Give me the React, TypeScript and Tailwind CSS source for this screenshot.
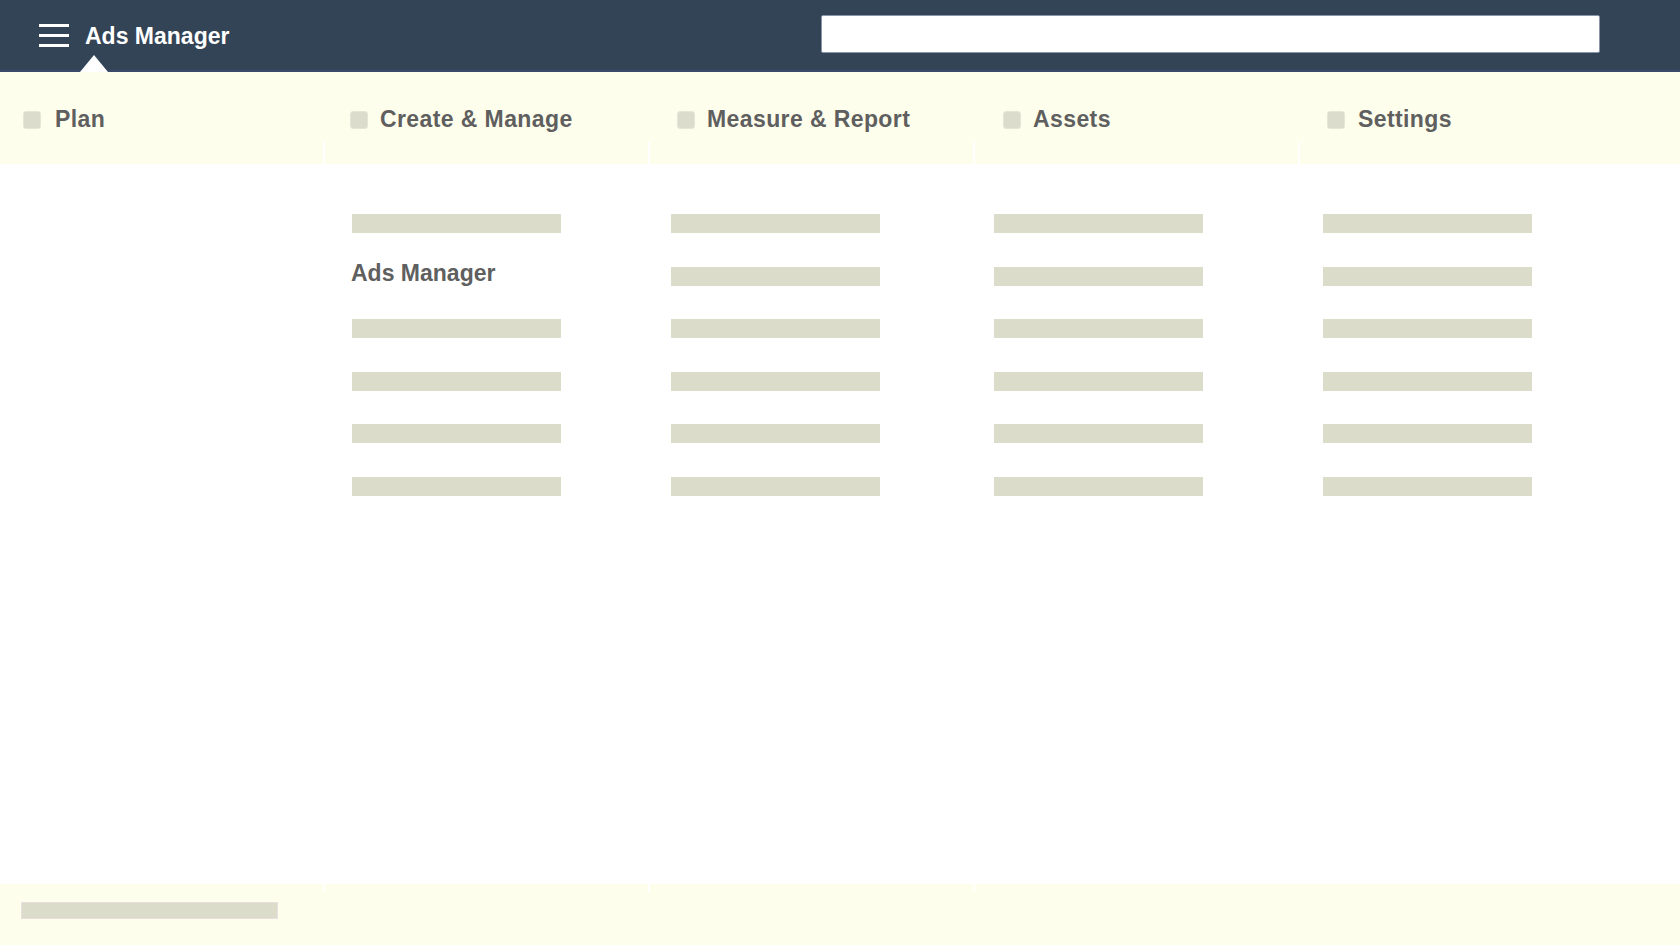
import React from "react";

const font = { fontFamily: '"Liberation Sans", Arial, sans-serif' };

const navItems = [
  { label: "Plan", pad: "pl-[23px]", gap: "gap-[14px]", divider: false },
  { label: "Create & Manage", pad: "pl-[27px]", gap: "gap-[12px]", divider: true },
  { label: "Measure & Report", pad: "pl-[29px]", gap: "gap-[12px]", divider: true },
  { label: "Assets", pad: "pl-[30px]", gap: "gap-[12px]", divider: true },
  { label: "Settings", pad: "pl-[29px]", gap: "gap-[13px]", divider: true },
];

const colWidths = ["w-[323px]", "w-[325px]", "w-[325px]", "w-[325px]", "flex-1"];
const contentPads = ["pl-0", "pl-[29px]", "pl-[23px]", "pl-[21px]", "pl-[25px]"];

function Bar() {
  return <div className="h-[19px] w-[209px] bg-[#dcdccb]" />;
}

export default function App() {
  return (
    <div className="flex h-[945px] w-[1680px] flex-col overflow-hidden bg-white" style={font}>
      {/* Header */}
      <header className="relative flex h-[72px] shrink-0 items-center border-b-2 border-[#3b4a6a] bg-[#334456]">
        <div className="ml-[39px] flex w-[30px] flex-col gap-[7px]">
          <div className="h-[3px] w-[30px] bg-white" />
          <div className="h-[3px] w-[30px] bg-white" />
          <div className="h-[3px] w-[30px] bg-white" />
        </div>
        <div className="ml-[16px] mt-[2px] text-[23px] font-bold leading-none text-white">Ads Manager</div>
        <div className="mb-[2px] ml-auto mr-[80px] h-[38px] w-[779px] rounded-[2px] border border-[#8a96a8] bg-white" />
        <svg className="absolute bottom-[-2px] left-[80px]" width="28" height="17" viewBox="0 0 28 17">
          <polygon points="14,0 28,17 0,17" fill="#ffffff" />
        </svg>
      </header>

      {/* Nav */}
      <nav className="flex h-[92px] shrink-0 bg-[#fefeec]">
        {navItems.map((item, i) => (
          <div key={item.label} className={`flex flex-col ${colWidths[i]}`}>
            <div className={`flex h-[70px] items-start pt-[36px] ${item.pad}`}>
              <div className={`flex items-center ${item.gap}`}>
                <div className="h-[18px] w-[18px] rounded-[3px] border border-[#e6e6d8] bg-[#dcdccc]" />
                <span className="text-[23px] font-bold leading-none tracking-[0.4px] text-[#5f5f5f]">
                  {item.label}
                </span>
              </div>
            </div>
            <div className={`h-[22px] ${item.divider ? "border-l-2 border-white" : ""}`} />
          </div>
        ))}
      </nav>

      {/* Content */}
      <main className="flex flex-1 pt-[50px]">
        {colWidths.map((w, i) => (
          <div key={i} className={`flex flex-col gap-[33.5px] ${w} ${contentPads[i]}`}>
            {i === 0
              ? null
              : Array.from({ length: 6 }).map((_, r) =>
                  i === 1 && r === 1 ? (
                    <div key={r} className="h-[19px]">
                      <div className="-ml-[1px] -mt-[3px] text-[23px] font-bold leading-[19px] text-[#5f5f5f]">Ads Manager</div>
                    </div>
                  ) : (
                    <Bar key={r} />
                  )
                )}
          </div>
        ))}
      </main>

      {/* Footer */}
      <footer className="flex h-[61px] shrink-0 bg-[#fefeec]">
        {colWidths.map((w, i) => (
          <div key={i} className={`flex flex-col ${w}`}>
            <div className={`h-[8px] ${i > 0 && i < 4 ? "border-l-2 border-white" : ""}`} />
            {i === 0 ? (
              <div className="ml-[21px] mt-[10px] h-[17px] w-[257px] border border-[#e8e0e0] bg-[#dcdccb]" />
            ) : null}
          </div>
        ))}
      </footer>
    </div>
  );
}
